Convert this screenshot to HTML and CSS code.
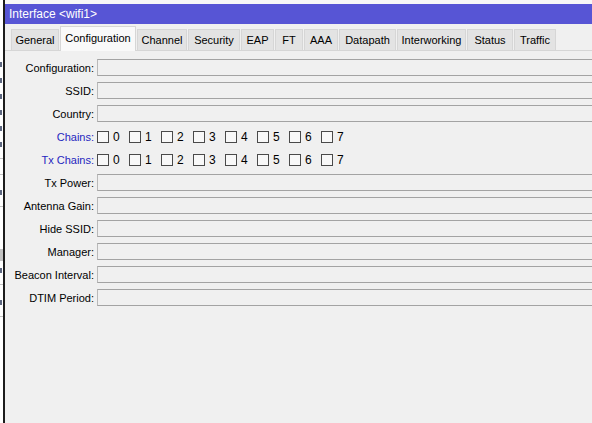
FILE: index.html
```html
<!DOCTYPE html>
<html lang="en">

<head>
  <meta charset="utf-8">
  <title>Interface &lt;wifi1&gt;</title>
  <link rel="stylesheet" href="styles.css">
</head>

<body>

  <div class="desk">

    <!-- edge of the list window sitting behind the dialog -->
    <div class="behind">
      <div class="behind-row text"></div>
      <div class="behind-row text"></div>
      <div class="behind-row text"></div>
      <div class="behind-row text"></div>
      <div class="behind-row text"></div>
      <div class="behind-row text"></div>
      <div class="behind-row line"></div>
      <div class="behind-row line"></div>
      <div class="behind-row text"></div>
      <div class="behind-row line"></div>
      <div class="behind-row gap"></div>
      <div class="behind-row grey"></div>
      <div class="behind-row text"></div>
      <div class="behind-row line"></div>
      <div class="behind-row text"></div>
      <div class="behind-row line"></div>
    </div>

    <div class="frame">
      <div class="window">
        <div class="title">Interface &lt;wifi1&gt;</div>

        <div class="tabs">
          <div class="tab w-general">General</div>
          <div class="tab active w-config">Configuration</div>
          <div class="tab w-channel">Channel</div>
          <div class="tab w-security">Security</div>
          <div class="tab w-eap">EAP</div>
          <div class="tab w-ft">FT</div>
          <div class="tab w-aaa">AAA</div>
          <div class="tab w-datapath">Datapath</div>
          <div class="tab w-inter">Interworking</div>
          <div class="tab w-status">Status</div>
          <div class="tab w-traffic">Traffic</div>
        </div>

        <div class="form">
          <div class="row">
            <label class="lbl">Configuration:</label>
            <div class="field"></div>
          </div>
          <div class="row">
            <label class="lbl">SSID:</label>
            <div class="field"></div>
          </div>
          <div class="row">
            <label class="lbl">Country:</label>
            <div class="field"></div>
          </div>
          <div class="row">
            <label class="lbl link">Chains:</label>
            <div class="checks">
              <span class="check"><i class="box"></i>0</span>
              <span class="check"><i class="box"></i>1</span>
              <span class="check"><i class="box"></i>2</span>
              <span class="check"><i class="box"></i>3</span>
              <span class="check"><i class="box"></i>4</span>
              <span class="check"><i class="box"></i>5</span>
              <span class="check"><i class="box"></i>6</span>
              <span class="check"><i class="box"></i>7</span>
            </div>
          </div>
          <div class="row">
            <label class="lbl link">Tx Chains:</label>
            <div class="checks">
              <span class="check"><i class="box"></i>0</span>
              <span class="check"><i class="box"></i>1</span>
              <span class="check"><i class="box"></i>2</span>
              <span class="check"><i class="box"></i>3</span>
              <span class="check"><i class="box"></i>4</span>
              <span class="check"><i class="box"></i>5</span>
              <span class="check"><i class="box"></i>6</span>
              <span class="check"><i class="box"></i>7</span>
            </div>
          </div>
          <div class="row">
            <label class="lbl">Tx Power:</label>
            <div class="field"></div>
          </div>
          <div class="row">
            <label class="lbl">Antenna Gain:</label>
            <div class="field"></div>
          </div>
          <div class="row">
            <label class="lbl">Hide SSID:</label>
            <div class="field"></div>
          </div>
          <div class="row">
            <label class="lbl">Manager:</label>
            <div class="field"></div>
          </div>
          <div class="row">
            <label class="lbl">Beacon Interval:</label>
            <div class="field"></div>
          </div>
          <div class="row">
            <label class="lbl">DTIM Period:</label>
            <div class="field"></div>
          </div>
        </div>
      </div>
    </div>

  </div>

</body>

</html>
```

FILE: styles.css
```css
/* ******************** global ******************* */

* {
  box-sizing: border-box;
}

html,
body {
  margin: 0;
  padding: 0;
  width: 100%;
  height: 100%;
  overflow: hidden;
  background-color: #fcfcfc;
  font-family: "Liberation Sans", Arial, sans-serif;
  font-size: 11px;
  color: #000;
}

.desk {
  display: flex;
  height: 100%;
}

/* ******************** window behind ******************* */

.behind {
  width: 3px;
  padding-top: 62px;
  background-color: #fff;
}

.behind-row {
  height: 8px;
  margin-bottom: 7px;
}

.behind-row.text {
  width: 2px;
  height: 5px;
  margin-bottom: 11px;
  background-color: #5d6780;
}

.behind-row.line {
  height: 1px;
  margin-bottom: 15px;
  background-color: #c4c4c4;
}

.behind-row.gap {
  height: 20px;
}

.behind-row.grey {
  height: 12px;
  background-color: #c2c2c2;
}

/* ******************** dialog ******************* */

.frame {
  flex: 1;
  display: flex;
  padding-top: 4px;
  border-left: 2px solid #1c1c1c;
  background-color: #f7f7f7;
  overflow: hidden;
}

.window {
  flex: 1;
  display: flex;
  flex-direction: column;
  background-color: #f0f0f0;
  overflow: hidden;
}

.title {
  height: 20px;
  line-height: 20px;
  padding-left: 4px;
  background-color: #5755d5;
  color: #fff;
  font-size: 12px;
  white-space: nowrap;
}

/* ******************** tabs ******************* */

.tabs {
  display: flex;
  align-items: flex-end;
  gap: 1px;
  height: 27px;
  padding-left: 6px;
  border-bottom: 1px solid #d6d6d6;
}

.tab {
  height: 21px;
  line-height: 20px;
  text-align: center;
  white-space: nowrap;
  background-color: #e3e3e3;
  border: 1px solid #d6d6d6;
  border-bottom: none;
}

.tab.active {
  height: 25px;
  line-height: 23px;
  margin-bottom: -1px;
  background-color: #f9f9f9;
  border-color: #d6d6d6;
  position: relative;
}

.w-general { width: 48px; }
.w-config { width: 76px; }
.w-channel { width: 50px; }
.w-security { width: 52px; }
.w-eap { width: 33px; }
.w-ft { width: 28px; }
.w-aaa { width: 34px; }
.w-datapath { width: 57px; }
.w-inter { width: 69px; }
.w-status { width: 46px; }
.w-traffic { width: 42px; }

/* ******************** form ******************* */

.form {
  padding-top: 5px;
}

.row {
  display: flex;
  align-items: center;
  height: 23px;
}

.lbl {
  width: 89px;
  margin-right: 3px;
  text-align: right;
  white-space: nowrap;
}

.lbl.link {
  color: #2626bf;
}

.field {
  flex: 1;
  height: 17px;
  margin-right: -10px;
  border: 1px solid #a3a3a3;
  border-left-color: #b9b9b9;
  background-color: #f0f0f0;
}

.checks {
  display: flex;
}

.check {
  display: flex;
  align-items: center;
  width: 32px;
  font-size: 12px;
}

.box {
  display: inline-block;
  width: 12px;
  height: 12px;
  margin-right: 4px;
  border: 1px solid #4a4a4a;
  background-color: #f8f8f8;
}
```
